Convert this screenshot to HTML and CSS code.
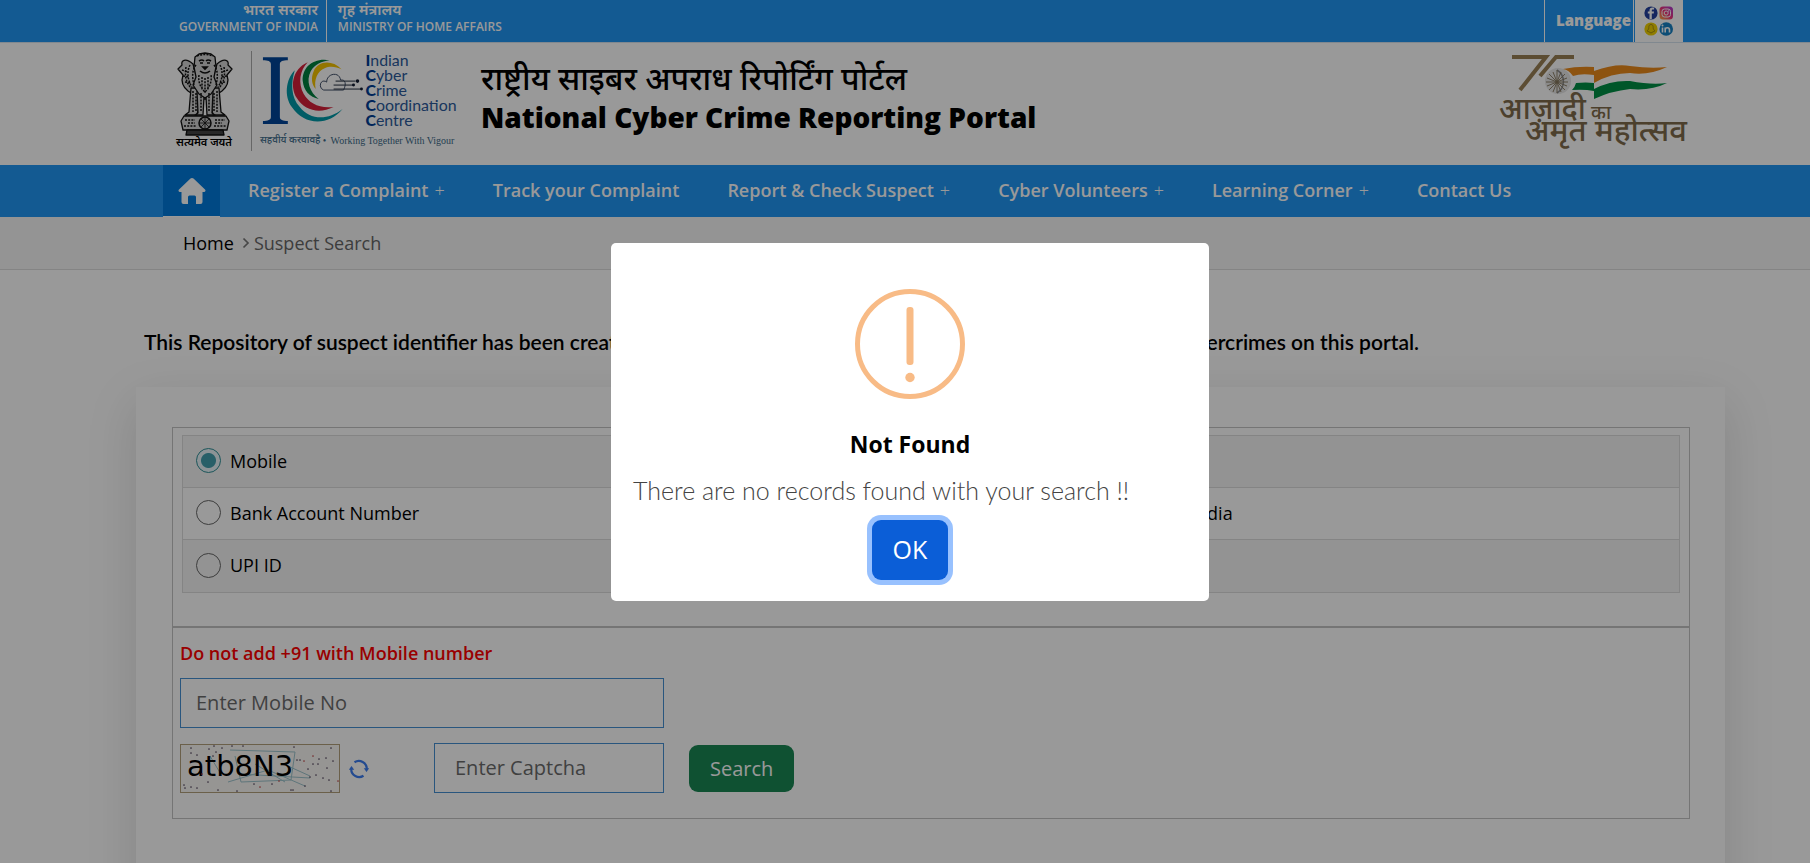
FILE: index.html
```html
<!DOCTYPE html>
<html lang="en">
<head>
<meta charset="utf-8">
<title>National Cyber Crime Reporting Portal</title>
<meta name="viewport" content="width=device-width, initial-scale=1">
<link rel="stylesheet" href="styles.css">
</head>
<body>
<div class="topbar">
  <div class="gov">
    <div class="gov-part gov-left"><span lang="hi">भारत सरकार</span><span>GOVERNMENT OF INDIA</span></div>
    <div class="gov-part"><span lang="hi">गृह मंत्रालय</span><span>MINISTRY OF HOME AFFAIRS</span></div>
  </div>
  <div class="tools">
    <a class="language" href="#">Language</a>
    <a class="social" href="#" aria-label="Social media">
      <svg width="30" height="30" viewBox="0 0 30 30">
        <circle cx="7" cy="7" r="6.6" fill="#23409f"/>
        <path d="M7.8 13V7.6h1.9l.3-2.1H7.8V4.4c0-.7.3-1 1-1h1.3V1.7C9.700 1.600 9 1.500 8.400 1.500 6.500 1.500 5.500 2.700 5.500 4.400v1.100H3.800v2.100h1.700V13z" fill="#fff"/>
        <defs><linearGradient id="ig" x1="0" y1="1" x2="1" y2="0"><stop offset="0" stop-color="#ffb13d"/><stop offset=".5" stop-color="#f0347c"/><stop offset="1" stop-color="#a83bdc"/></linearGradient></defs>
        <rect x="15.500" y=".5" width="13.500" height="13" rx="3.500" fill="url(#ig)"/>
        <rect x="18" y="3" width="8.500" height="8" rx="2.500" fill="none" stroke="#fff"/>
        <circle cx="22.200" cy="7" r="2" fill="none" stroke="#fff"/><circle cx="24.600" cy="4.900" r=".6" fill="#fff"/>
        <circle cx="7" cy="23" r="6.600" fill="#f0d000"/>
        <path d="M7 18.500c-1.600 0-2.200 1.100-2.200 3.200 0 1.800-1 2.500-1.800 3.100l1.900 1 2.100 1.200 2.100-1.200 1.900-1c-.8-.6-1.800-1.300-1.800-3.100 0-2.100-.6-3.200-2.200-3.200z" fill="none" stroke="#a08a10" stroke-width=".9"/>
        <circle cx="22.200" cy="23" r="6.800" fill="#1681c4"/>
        <path d="M18.500 21.500v5M21.200 26.500v-5M21.200 24c0-3 4.300-3 4.300 0v2.500" fill="none" stroke="#fff" stroke-width="1.600"/><circle cx="18.500" cy="19.500" r="1" fill="#fff"/>
      </svg>
    </a>
  </div>
</div>

<header class="masthead">
  <svg class="emblem" width="60" height="100" viewBox="0 0 60 100" role="img" aria-label="State Emblem of India">
    <g stroke="#111" stroke-width="1.300" fill="#d2d2d2" stroke-linejoin="round">
      <path d="M18 13C10 6 6 10 7 14l-4 4 5 6c-2 6 0 12 5 16l3 2 8-8zM42 13c8-7 12-3 11 1l4 4-5 6c2 6 0 12-5 16l-3 2-8-8z"/>
      <path d="M16 37l-2 24-4 3h12l3-16h10l3 16h12l-4-3-2-24z"/>
      <path d="M22 40l1 22-3 2h8l1-18h2l1 18h8l-3-2 1-22z"/>
      <path d="M20 6l4-3 6-1 6 1 4 3 1 10-2 10 3 8-6 9-6 4-6-4-6-9 3-8-2-10z"/>
      <path d="M9 65h42l3 5-2 9H8l-2-9z"/>
      <path d="M12 79h36l1 5H11z" fill="#444"/>
    </g>
    <g fill="none" stroke="#111" stroke-width="1.500" stroke-dasharray="2 1.200">
      <path d="M21 14c-4 5-4 12-2 20M39 14c4 5 4 12 2 20M24 24c-1 6 1 12 6 17 5-5 7-11 6-17M27 26v13M30 27v15M33 26v13M15 14c-3 6-3 14 2 22M45 14c3 6 3 14-2 22M11 16c-1 7-1 13 4 20M49 16c1 7 1 13-4 20"/>
      <path d="M18 40v21M21 42v19M26 42v19M34 42v19M39 42v19M42 40v21M10 69h10M40 69h10M9 75h12M39 75h12M13 72h7M40 72h7"/>
      <path d="M22 5q8-3 16 0M7 19l6 2M53 19l-6 2M8 25l6 1M52 25l-6 1M10 31l6 1M50 31l-6 1"/>
    </g>
    <path d="M24 10q3-2 5 0M31 10q2-2 5 0M25 12h3M32 12h3M28 16h4l-2 2zM25 20q5 4 10 0" fill="none" stroke="#111" stroke-width="1.600"/>
    <circle cx="30" cy="72" r="6" fill="#bbb" stroke="#111" stroke-width="1.500"/>
    <path d="M30 66v12M24 72h12M26 68l8 8M34 68l-8 8" stroke="#111" stroke-width=".8"/>
    <text class="deva" x="29" y="95" text-anchor="middle" font-size="11" font-weight="600" lang="hi">सत्यमेव जयते</text>
  </svg>
  <svg class="i4c" width="206" height="100" viewBox="0 0 206 100" role="img" aria-label="Indian Cyber Crime Coordination Centre">
    <path d="M11 6h25v3c-5 0-8 1-8 4v53c0 3 3 4 8 4v3H11v-3c5 0 8-1 8-4V13c0-3-3-4-8-4z" fill="#00459a"/>
    <path d="M43 19C34 28 32 45 40 56C52 74 76 76 91 58C76 70 58 69 48 56C39 46 39 32 43 19z" fill="#009aa8"/>
    <path d="M56 11C40 18 38 36 45 47C53 60 68 63 82 56C68 58 57 52 52 43C46 32 48 19 56 11z" fill="#d8203a"/>
    <path d="M78 9C62 6 50 16 51 30C52 40 58 46 67 48C58 41 54 30 59 20C63 13 70 10 78 9z" fill="#00803e"/>
    <path d="M90 18C80 8 66 10 62 20C59 27 60 33 64 38C62 28 66 20 73 17C79 14 85 16 90 18z" fill="#f5c400"/>
    <path d="M72 39a5 5 0 0 1-1-9c2 0 3 0 4 1 0-9 13-11 14-2 5-1 6 4 3 10z" fill="none" stroke="#44526a"/>
    <path d="M84 30h20M82 34h20M82 38h27" stroke="#222c3c" fill="none"/>
    <g fill="#111c30"><circle cx="106" cy="30" r="1.800"/><circle cx="102" cy="34" r="1.500"/><circle cx="110" cy="38" r="1.500"/></g>
    <g class="i4c-words" font-size="16">
      <text x="114" y="15"><tspan class="b">I</tspan>ndian</text>
      <text x="114" y="30"><tspan class="b">C</tspan>yber</text>
      <text x="114" y="45"><tspan class="b">C</tspan>rime</text>
      <text x="114" y="60"><tspan class="b">C</tspan>oordination</text>
      <text x="114" y="75"><tspan class="b">C</tspan>entre</text>
    </g>
    <text class="deva" x="8" y="92" font-size="10" font-weight="500" fill="#44708f" lang="hi">सहवीर्य करवावहै</text>
    <text class="motto" x="71" y="93" font-size="10">•</text>
    <text class="motto" x="79" y="93" font-size="10">Working Together With Vigour</text>
  </svg>
  <div class="names">
    <p class="name-hi" lang="hi">राष्ट्रीय साइबर अपराध रिपोर्टिंग पोर्टल</p>
    <h1 class="name-en">National Cyber Crime Reporting Portal</h1>
  </div>
  <svg class="azadi" width="194" height="100" viewBox="0 0 194 100" role="img" aria-label="Azadi Ka Amrit Mahotsav">
    <g fill="none" stroke="#9a8055" stroke-width="4">
      <path d="M16 6h34L24 39M78 6H60L44 25" />
    </g>
    <circle cx="62" cy="30" r="13" fill="#e6e6e6"/>
    <path d="M61 19a13.500 13.500 0 0 1 0 23" fill="none" stroke="#8b8d92" stroke-width="1.500"/>
    <path d="M61 19v23M50 31h22M53 23l16 16M69 23L53 39M57 21l8 20M65 21l-8 20M51 27l20 8M51 35l20-8" stroke="#84765c" stroke-width=".9"/>
    <path d="M67 18Q82 15 98 16V20Q120 12 134 15Q155 18 171 16Q152 25 134 22Q115 22 98 32V24Q85 22 77 25Q73 19 67 18z" fill="#eb8a1c"/>
    <path d="M80 32Q90 31 98 32V38Q115 29 134 30Q155 34 171 32Q155 40 134 38Q115 40 98 48V40Q88 38 76 39Q79 36 80 32z" fill="#008f45"/>
    <g class="deva" fill="#7f6c4c" font-weight="500" lang="hi">
      <text x="3" y="68" font-size="30">आज़ादी</text>
      <text x="95" y="68" font-size="19">का</text>
      <text x="29" y="90" font-size="31">अमृत महोत्सव</text>
    </g>
  </svg>
</header>

<nav class="nav" aria-label="Main">
  <a class="nav-home" href="#" aria-label="Home">
    <svg width="28" height="28" viewBox="0 0 28 28"><path d="M14 1a2 2 0 0 1 1.500.6l11.500 11c1 1 .5 2.400-1 2.400h-1.500v10a2 2 0 0 1-2 2H18v-7a1.500 1.500 0 0 0-1.500-1.500h-5A1.500 1.500 0 0 0 10 20v7H5.500a2 2 0 0 1-2-2V15H2c-1.500 0-2-1.400-1-2.400l11.500-11A2 2 0 0 1 14 1z" fill="#fff"/></svg>
  </a>
  <ul class="nav-list">
    <li><a href="#">Register a Complaint<span class="plus">+</span></a></li>
    <li><a href="#">Track your Complaint</a></li>
    <li><a href="#">Report &amp; Check Suspect<span class="plus">+</span></a></li>
    <li><a href="#">Cyber Volunteers<span class="plus">+</span></a></li>
    <li><a href="#">Learning Corner<span class="plus">+</span></a></li>
    <li><a href="#">Contact Us</a></li>
  </ul>
</nav>

<nav class="crumbs" aria-label="Breadcrumb">
  <a href="#">Home</a>
  <svg width="8" height="12" viewBox="0 0 8 12"><path d="M1.500 1.500L6 6l-4.500 4.500" fill="none" stroke="#777" stroke-width="1.700"/></svg>
  <span>Suspect Search</span>
</nav>

<main class="main">
  <p class="intro">This Repository of suspect identifier has been created by I4C based on the complaints reported by all victims of cybercrimes on this portal.</p>
  <form class="card">
    <div class="panel panel-types">
      <table class="types">
        <colgroup><col class="col-a"><col></colgroup>
        <tbody>
          <tr>
            <td><label><input type="radio" name="type" checked>Mobile</label></td>
            <td><label><input type="radio" name="type">Email</label></td>
          </tr>
          <tr>
            <td><label><input type="radio" name="type">Bank Account Number</label></td>
            <td><label><input type="radio" name="type">Social Media</label></td>
          </tr>
          <tr>
            <td><label><input type="radio" name="type">UPI ID</label></td>
            <td></td>
          </tr>
        </tbody>
      </table>
    </div>
    <div class="panel panel-search">
      <label class="hint" for="mobile">Do not add +91 with Mobile number</label>
      <input class="field" id="mobile" type="text" placeholder="Enter Mobile No">
      <div class="captcha-row">
        <svg class="captcha" width="160" height="49" viewBox="0 0 160 49">
          <rect x=".5" y=".5" width="159" height="48" fill="#fbf8f6" stroke="#b3a07c"/>
          <g fill="none" stroke="#9cc4cc"><path d="M50 6l65 2-4 28-50 2-6-26M108 22l22 10M48 38l40-12 37 16M60 30l70 4M75 20l30 18M30 12l12 20"/></g>
          <text class="captcha-text" x="7" y="32" font-size="29">atb8N3</text>
          <path d="M11 4v.1M11 9v.1M17 11v.1M29 5v.1M34 2v.1M42 4v.1M52 2v.1M63 2v.1M114 3v.1M151 4v.1M4 41v.1M5 44v.1M11 43v.1M17 44v.1M28 38v.1M38 46v.1M57 47v.1M74 40v.1M92 40v.1M111 46v.1M117 16v.1M120 16v.1M128 25v.1M133 20v.1M138 20v.1M139 15v.1M146 14v.1M153 17v.1M130 33v.1M136 31v.1M143 34v.1M149 36v.1M147 24v.1M125 42v.1M113 46v.1M151 47v.1M36 8v.1M33 12v.1" stroke="#4a3d55" stroke-width="1.600" stroke-linecap="round"/>
          <path d="M158 37v.1M133 12v.1M124 17v.1M22 30v.1M80 43v.1M99 37v.1" stroke="#c04040" stroke-width="1.600" stroke-linecap="round"/>
        </svg>
        <button class="refresh" type="button" aria-label="Refresh captcha">
          <svg width="20" height="20" viewBox="0 0 20 20"><path d="M5.500 3.200A8 8 0 0 1 17.800 10M14.500 16.800A8 8 0 0 1 2.200 10" fill="none" stroke="#3c7df0" stroke-width="2.200"/><path d="M14.800 9.300H20.200L17.500 13zM5.200 10.700H-.2L2.500 7z" fill="#3c7df0"/></svg>
        </button>
        <input class="field field-captcha" type="text" placeholder="Enter Captcha" aria-label="Enter Captcha">
        <button class="search" type="button">Search</button>
      </div>
    </div>
  </form>
</main>

<div class="overlay">
  <div class="modal" role="alertdialog" aria-modal="true" aria-labelledby="modal-title" aria-describedby="modal-text">
    <svg class="warn" width="110" height="110" viewBox="0 0 110 110"><circle cx="55" cy="55" r="52.500" fill="none" stroke="#f8bb86" stroke-width="5"/><rect x="51.500" y="18" width="7" height="58" rx="3" fill="#f8bb86"/><circle cx="55" cy="88.500" r="4.700" fill="#f8bb86"/></svg>
    <h2 class="modal-title" id="modal-title">Not Found</h2>
    <p class="modal-text" id="modal-text">There are no records found with your search !!</p>
    <button class="ok" type="button">OK</button>
  </div>
</div>
</body>
</html>
```
FILE: styles.css
```css
* { box-sizing: border-box; }

body {
  margin: 0;
  min-height: 100vh;
  overflow: hidden;
  background: #fff;
  color: #000;
  font-family: "Open Sans", "Noto Sans", sans-serif;
  font-size: 18px;
}

a { color: inherit; text-decoration: none; }
p, h1, h2, ul { margin: 0; padding: 0; }
svg { display: block; flex: none; }
button { cursor: pointer; }

/* Top bar */
.topbar {
  display: flex;
  justify-content: space-between;
  height: 43px;
  padding: 0 127px 0 179px;
  border-bottom: 1px solid #d5e3ee;
  background: #2196f3;
  color: #fff;
}
.gov { display: flex; }
.gov-part {
  display: flex;
  flex-direction: column;
  padding-left: 11px;
  font-size: 12px;
  font-weight: 600;
  line-height: 18px;
}
.gov-part [lang="hi"] { font-size: 15px; }
.gov-left {
  align-items: flex-end;
  padding: 0 8px 0 0;
  border-right: 1px solid #fff;
}
.tools { display: flex; }
.language {
  padding: 8px 2px 0 11px;
  border: solid #fff;
  border-width: 0 1px;
  font-size: 15px;
  font-weight: 800;
  line-height: 24px;
}
.social {
  margin-left: 1px;
  padding: 6px 9px;
  background: #fff;
}

/* Masthead */
.masthead {
  display: flex;
  align-items: flex-start;
  height: 122px;
  padding: 8px 120px 0 175px;
}
.deva { font-family: "Noto Sans", "Noto Sans Devanagari", sans-serif; }
.i4c {
  margin-left: 16px;
  border-left: 1px solid #aaa;
}
.i4c-words { font-family: Lato, sans-serif; fill: #2c5a9c; }
.i4c-words .b { font-weight: 900; fill: #003f96; }
.motto { font-family: "Liberation Serif", serif; fill: #3c6a88; }
.names { margin: 6px auto 0 24px; }
.name-hi { font-size: 32px; font-weight: 500; line-height: 42px; }
.name-en { font-size: 28px; font-weight: 800; line-height: 36px; }

/* Navigation */
.nav {
  display: flex;
  height: 52px;
  padding-left: 163px;
  background: #2196f3;
  color: #fff;
}
.nav-home {
  display: flex;
  align-items: center;
  justify-content: center;
  width: 57px;
  border-bottom: 1px solid #fff;
  background: #007bdc;
}
.nav-list {
  display: flex;
  align-items: center;
  gap: 48px;
  margin-left: 28px;
  padding-bottom: 2px;
  list-style: none;
  font-weight: 600;
  white-space: nowrap;
}
.plus { margin-left: 6px; font-weight: 300; }

/* Breadcrumb */
.crumbs {
  display: flex;
  align-items: center;
  height: 53px;
  padding-left: 183px;
  border-bottom: 1px solid #dcdcdc;
  background: #f7f7f7;
}
.crumbs svg { margin: 0 4px 0 8px; }
.crumbs span { color: #666; }

/* Content */
.main { padding: 57px 85px 0 136px; }
.intro {
  padding-left: 8px;
  font-family: Lato, sans-serif;
  font-size: 21px;
  font-weight: 600;
  line-height: 30px;
  white-space: nowrap;
}
.card {
  margin-top: 30px;
  padding: 40px 35px 80px 36px;
  background: #fff;
  box-shadow: 0 16px 48px rgba(0, 0, 0, 0.13);
}
.panel { border: 1px solid #c4c4c4; }
.panel-types { padding: 7px 9px 33px; }
.panel-search { padding: 13px 7px 25px; }
.types {
  width: 100%;
  border-collapse: collapse;
  table-layout: fixed;
}
.col-a { width: 60%; }
.types tr { height: 52px; border: 1px solid #dcdcdc; }
.types tr:last-child { height: 53px; }
.types tr:nth-child(odd) { background: #f5f5f5; }
.types td { padding: 0 13px 2px; }
.types label {
  display: flex;
  align-items: center;
  gap: 9px;
  font-weight: 500;
}
.types input {
  appearance: none;
  width: 25px;
  height: 25px;
  margin: 0;
  border: 1px solid #666;
  border-radius: 50%;
}
.types input:checked {
  border-color: #2f8f96;
  background: radial-gradient(circle, #439fae 7px, #eaf6fa 8px);
}
.hint {
  display: block;
  margin-bottom: 13px;
  color: #f00;
  font-weight: 600;
  line-height: 24px;
}
.field {
  display: block;
  width: 484px;
  height: 50px;
  padding: 0 15px 2px;
  border: 1px solid #458fd2;
  background: #fff;
  font: inherit;
  font-size: 20px;
}
.field::placeholder { color: #6c6c6c; opacity: 1; }
.captcha-row {
  display: flex;
  align-items: center;
  margin-top: 15px;
}
.captcha, .refresh, .search { margin-top: 1px; }
.refresh {
  margin-right: 65px;
  margin-left: 9px;
  padding: 0;
  border: 0;
  background: none;
}
.field-captcha { width: 230px; padding: 0 20px 2px; }
.captcha-text { font-family: "DejaVu Sans", sans-serif; }
.search {
  height: 47px;
  margin-left: 25px;
  padding: 0 21px;
  border: 0;
  border-radius: 9px;
  background: #198754;
  color: #fff;
  font: inherit;
  font-size: 20px;
}

/* Dialog */
.overlay {
  position: fixed;
  inset: 0;
  display: flex;
  align-items: center;
  justify-content: center;
  padding: 0 0 19px 10px;
  background: rgba(0, 0, 0, 0.4);
}
.modal {
  display: flex;
  flex-direction: column;
  align-items: center;
  width: 598px;
  padding: 46px 22px 21px;
  border-radius: 5px;
  background: #fff;
}
.modal-title {
  margin-top: 27px;
  font-size: 23px;
  font-weight: 700;
  line-height: 36px;
}
.modal-text {
  align-self: flex-start;
  margin: 10px 0 12px;
  color: #444;
  font-family: Lato, sans-serif;
  font-size: 25px;
  font-weight: 300;
  line-height: 36px;
}
.ok {
  height: 60px;
  padding: 0 21px 2px;
  border: 0;
  border-radius: 9px;
  background: #0b5ed7;
  box-shadow: 0 0 0 5px #98c1fe;
  color: #fff;
  font: inherit;
  font-size: 25px;
}
```
